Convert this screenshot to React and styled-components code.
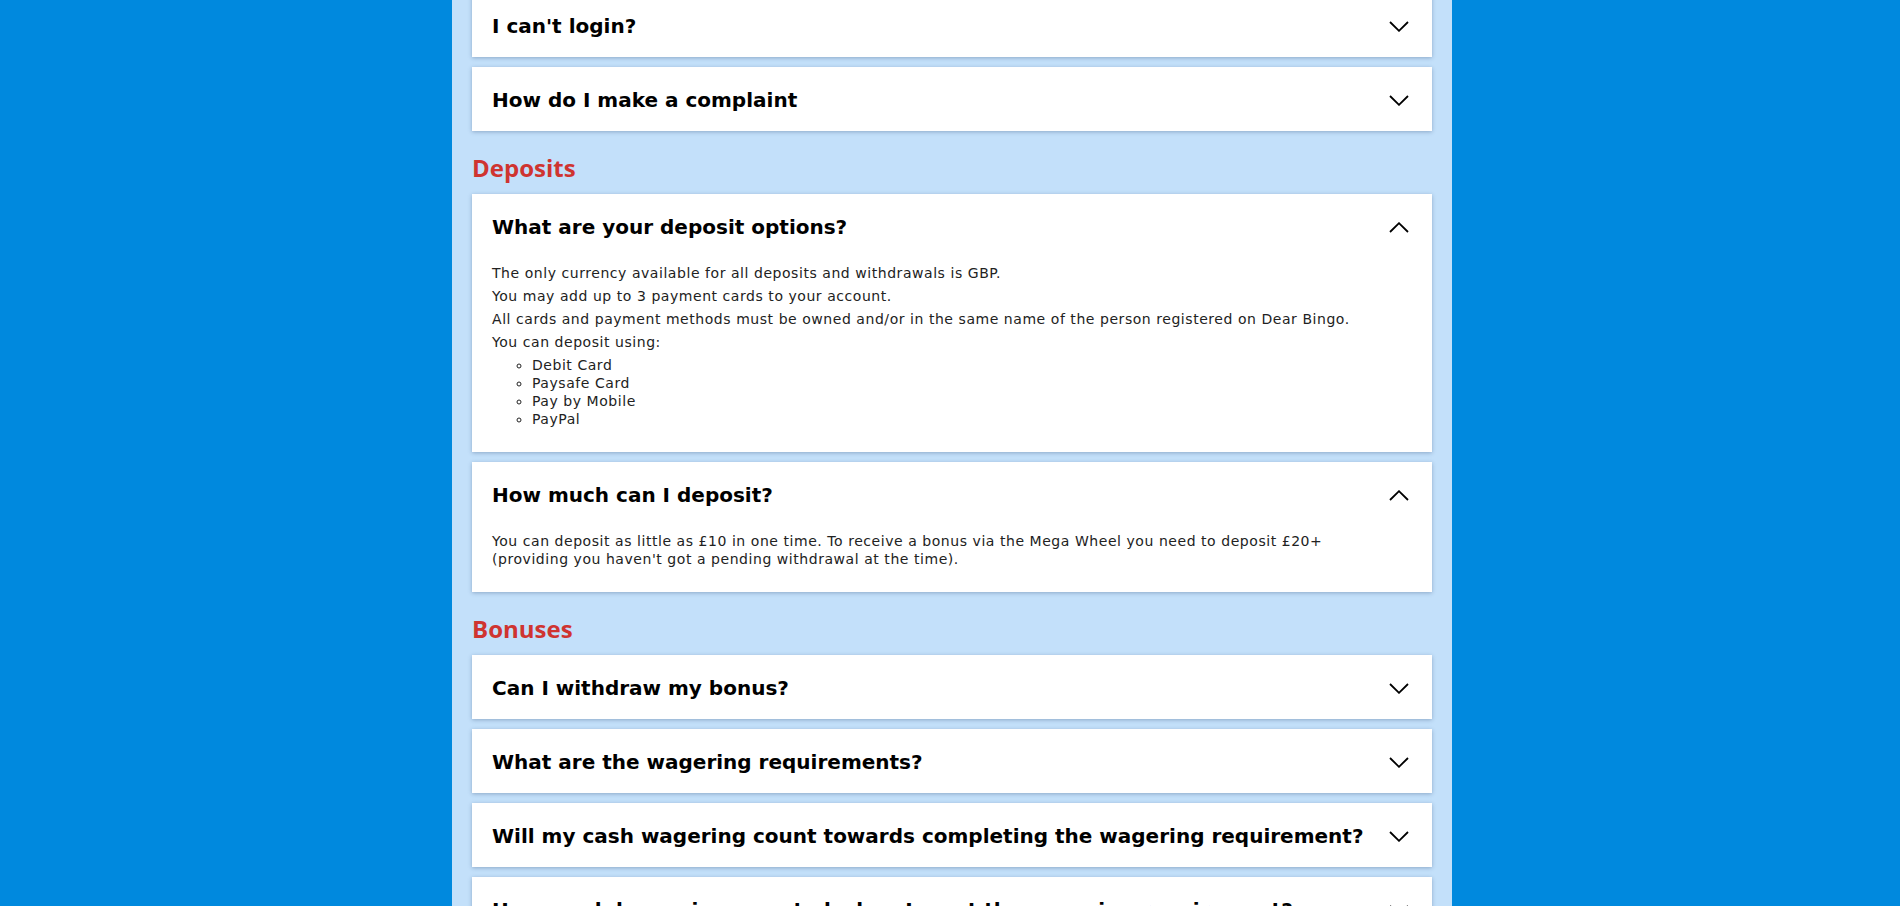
import styled, { createGlobalStyle } from "styled-components";

const GlobalStyle = createGlobalStyle`
    body {
        margin: 0;
        background: #0089de;
    }
`;

const sections = [
    {
        title: null,
        items: [
            { q: "I can't login?" },
            { q: "How do I make a complaint" },
        ],
    },
    {
        title: "Deposits",
        items: [
            {
                q: "What are your deposit options?",
                open: true,
                paragraphs: [
                    "The only currency available for all deposits and withdrawals is GBP.",
                    "You may add up to 3 payment cards to your account.",
                    "All cards and payment methods must be owned and/or in the same name of the person registered on Dear Bingo.",
                    "You can deposit using:",
                ],
                list: ["Debit Card", "Paysafe Card", "Pay by Mobile", "PayPal"],
            },
            {
                q: "How much can I deposit?",
                open: true,
                lines: [
                    "You can deposit as little as £10 in one time. To receive a bonus via the Mega Wheel you need to deposit £20+",
                    "(providing you haven't got a pending withdrawal at the time).",
                ],
            },
        ],
    },
    {
        title: "Bonuses",
        items: [
            { q: "Can I withdraw my bonus?" },
            { q: "What are the wagering requirements?" },
            { q: "Will my cash wagering count towards completing the wagering requirement?" },
            { q: "How much bonus is converted when I meet the wagering requirement?" },
        ],
    },
];

function Chevron({ up }) {
    return (
        <ChevronIcon width="20" height="11" viewBox="0 0 20 11">
            <path
                d={up ? "M1 10 L10 1.2 L19 10" : "M1 1 L10 9.8 L19 1"}
                fill="none"
                stroke="#000"
                strokeWidth="1.8"
            />
        </ChevronIcon>
    );
}

function FaqCard({ item }) {
    return (
        <Card>
            <Header>
                <Question>{item.q}</Question>
                <Chevron up={item.open} />
            </Header>
            {item.open && (
                <Answer>
                    {item.paragraphs &&
                        item.paragraphs.map((p) => <Para key={p}>{p}</Para>)}
                    {item.lines && (
                        <Para $last>
                            {item.lines[0]}
                            <br />
                            {item.lines[1]}
                        </Para>
                    )}
                    {item.list && (
                        <Bullets>
                            {item.list.map((li) => (
                                <li key={li}>{li}</li>
                            ))}
                        </Bullets>
                    )}
                </Answer>
            )}
        </Card>
    );
}

function App() {
    return (
        <Page>
            <GlobalStyle />
            <Panel>
                <Content>
                    {sections.map((s, i) => (
                        <section key={i}>
                            {s.title && <SectionTitle>{s.title}</SectionTitle>}
                            <List>
                                {s.items.map((item) => (
                                    <FaqCard key={item.q} item={item} />
                                ))}
                            </List>
                        </section>
                    ))}
                </Content>
            </Panel>
        </Page>
    );
}

export default App;

const Page = styled.div`
    display: flex;
    justify-content: center;
    padding-left: 4px;
    min-height: 100vh;
    overflow: hidden;
`;
const Panel = styled.main`
    width: 1000px;
    box-sizing: border-box;
    padding: 0 20px 40px;
    background: #c3e0fa;
`;
const Content = styled.div`
    margin-top: -7px;
`;
const SectionTitle = styled.h2`
    margin: 22px 0 11px;
    font-family: "Open Sans", "Noto Sans", sans-serif;
    font-weight: 700;
    font-size: 24px;
    line-height: 30px;
    color: #cf3430;
`;
const List = styled.div`
    display: flex;
    flex-direction: column;
    gap: 10px;
`;
const Card = styled.div`
    background: #fff;
    box-shadow: 0 1px 4px rgba(40, 70, 110, 0.35);
`;
const Header = styled.div`
    display: flex;
    align-items: center;
    justify-content: space-between;
    padding: 21px 23px 19px 20px;
`;
const Question = styled.h3`
    margin: 0;
    font-family: "DejaVu Sans", Verdana, sans-serif;
    font-weight: 700;
    font-size: 20px;
    line-height: 24px;
    color: #000;
`;
const ChevronIcon = styled.svg`
    flex-shrink: 0;
    display: block;
`;
const Answer = styled.div`
    padding: 6px 20px 24px;
    font-family: "DejaVu Sans", Verdana, Tahoma, sans-serif;
    font-size: 14px;
    letter-spacing: 0.55px;
    line-height: 18px;
    color: #222;
`;
const Para = styled.p`
    margin: 0 0 ${(p) => (p.$last ? "0" : "5px")};
`;
const Bullets = styled.ul`
    margin: 0;
    padding-left: 40px;
    list-style: circle;
`;
